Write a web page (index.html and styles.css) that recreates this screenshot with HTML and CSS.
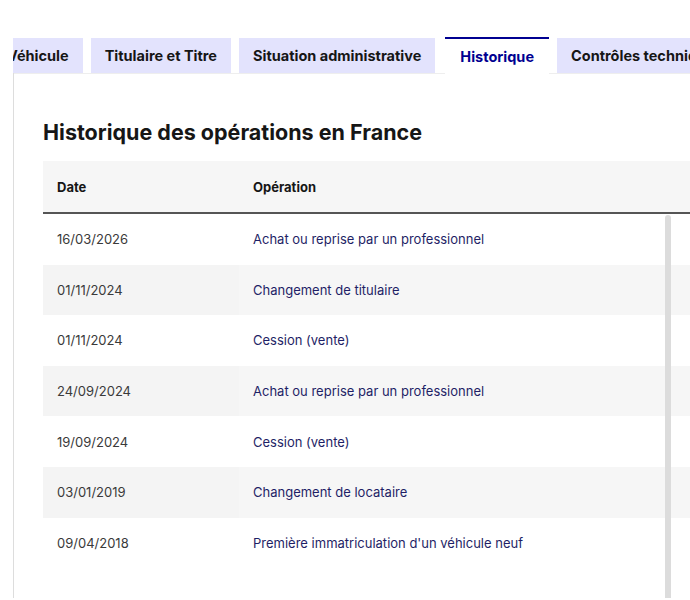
FILE: index.html
```html
<!DOCTYPE html>
<html lang="fr">
<head>
    <meta charset="UTF-8">
    <meta name="viewport" content="width=device-width, initial-scale=1.0">
    <title>Historique du véhicule</title>
    <link rel="stylesheet" href="styles.css">
</head>
<body>
    <div class="tabs">
        <ul class="tab-list">
            <li><button class="tab">Véhicule</button></li>
            <li><button class="tab">Titulaire et Titre</button></li>
            <li><button class="tab">Situation administrative</button></li>
            <li><button class="tab tab-active">Historique</button></li>
            <li><button class="tab">Contrôles techniques</button></li>
        </ul>
        <div class="panel">
            <h2 class="panel-title">Historique des opérations en France</h2>
            <table class="history">
                <thead>
                    <tr>
                        <th>Date</th>
                        <th>Opération</th>
                    </tr>
                </thead>
                <tbody>
                    <tr><td>16/03/2026</td><td>Achat ou reprise par un professionnel</td></tr>
                    <tr><td>01/11/2024</td><td>Changement de titulaire</td></tr>
                    <tr><td>01/11/2024</td><td>Cession (vente)</td></tr>
                    <tr><td>24/09/2024</td><td>Achat ou reprise par un professionnel</td></tr>
                    <tr><td>19/09/2024</td><td>Cession (vente)</td></tr>
                    <tr><td>03/01/2019</td><td>Changement de locataire</td></tr>
                    <tr><td>09/04/2018</td><td>Première immatriculation d'un véhicule neuf</td></tr>
                </tbody>
            </table>
            <div class="scroll-thumb"></div>
        </div>
    </div>
</body>
</html>
```

FILE: styles.css
```css
body {
    margin: 0;
    font-family: Inter, "Noto Sans", sans-serif;
    color: #161616;
    background-color: #fff;
    overflow: hidden;
}
.tabs {
    margin-left: 13px;
    padding-top: 37px;
    overflow: hidden;
}
.tab-list {
    list-style: none;
    margin: 0 0 0 -20px;
    padding: 0;
    display: flex;
    align-items: flex-end;
    gap: 8px;
    white-space: nowrap;
}
.tab {
    display: block;
    height: 35px;
    padding: 0 14px;
    border: none;
    background-color: #e3e3fd;
    color: #161616;
    font-family: inherit;
    font-size: 14.5px;
    font-weight: 700;
    cursor: pointer;
}
.tab-active {
    position: relative;
    z-index: 1;
    height: 38px;
    margin: 0 0 -2px 2px;
    padding: 0 15px 2px;
    border-top: 2px solid #000091;
    background-color: #fff;
    color: #000091;
}
.panel {
    position: relative;
    box-sizing: border-box;
    height: 525px;
    padding: 45px 0 0 29px;
    border-left: 1px solid #ddd;
    box-shadow: inset 0 1px 0 0 #eee;
    overflow: hidden;
}
.panel-title {
    margin: 0 0 15px;
    font-size: 21.5px;
    line-height: 28px;
    font-weight: 700;
}
.history {
    width: 720px;
    border-collapse: collapse;
    font-size: 13px;
    text-align: left;
}
.history th {
    height: 51px;
    padding: 0 14px;
    background-color: #f6f6f6;
    border-bottom: 2px solid #555;
    font-weight: 700;
}
.history th:first-child,
.history td:first-child {
    width: 168px;
}
.history td {
    height: 50.6px;
    padding: 0 13px 0 14px;
    color: #3a3a3a;
}
.history td + td {
    color: #1f1f66;
}
.history tbody tr:nth-child(even) td {
    background-color: #f6f6f6;
}
.history tbody tr:nth-child(even) td:first-child {
    background-color: #f4f4f4;
}
.scroll-thumb {
    position: absolute;
    top: 142px;
    left: 651px;
    width: 6px;
    height: 420px;
    border-radius: 3px;
    background-color: #dcdcdc;
}
```
